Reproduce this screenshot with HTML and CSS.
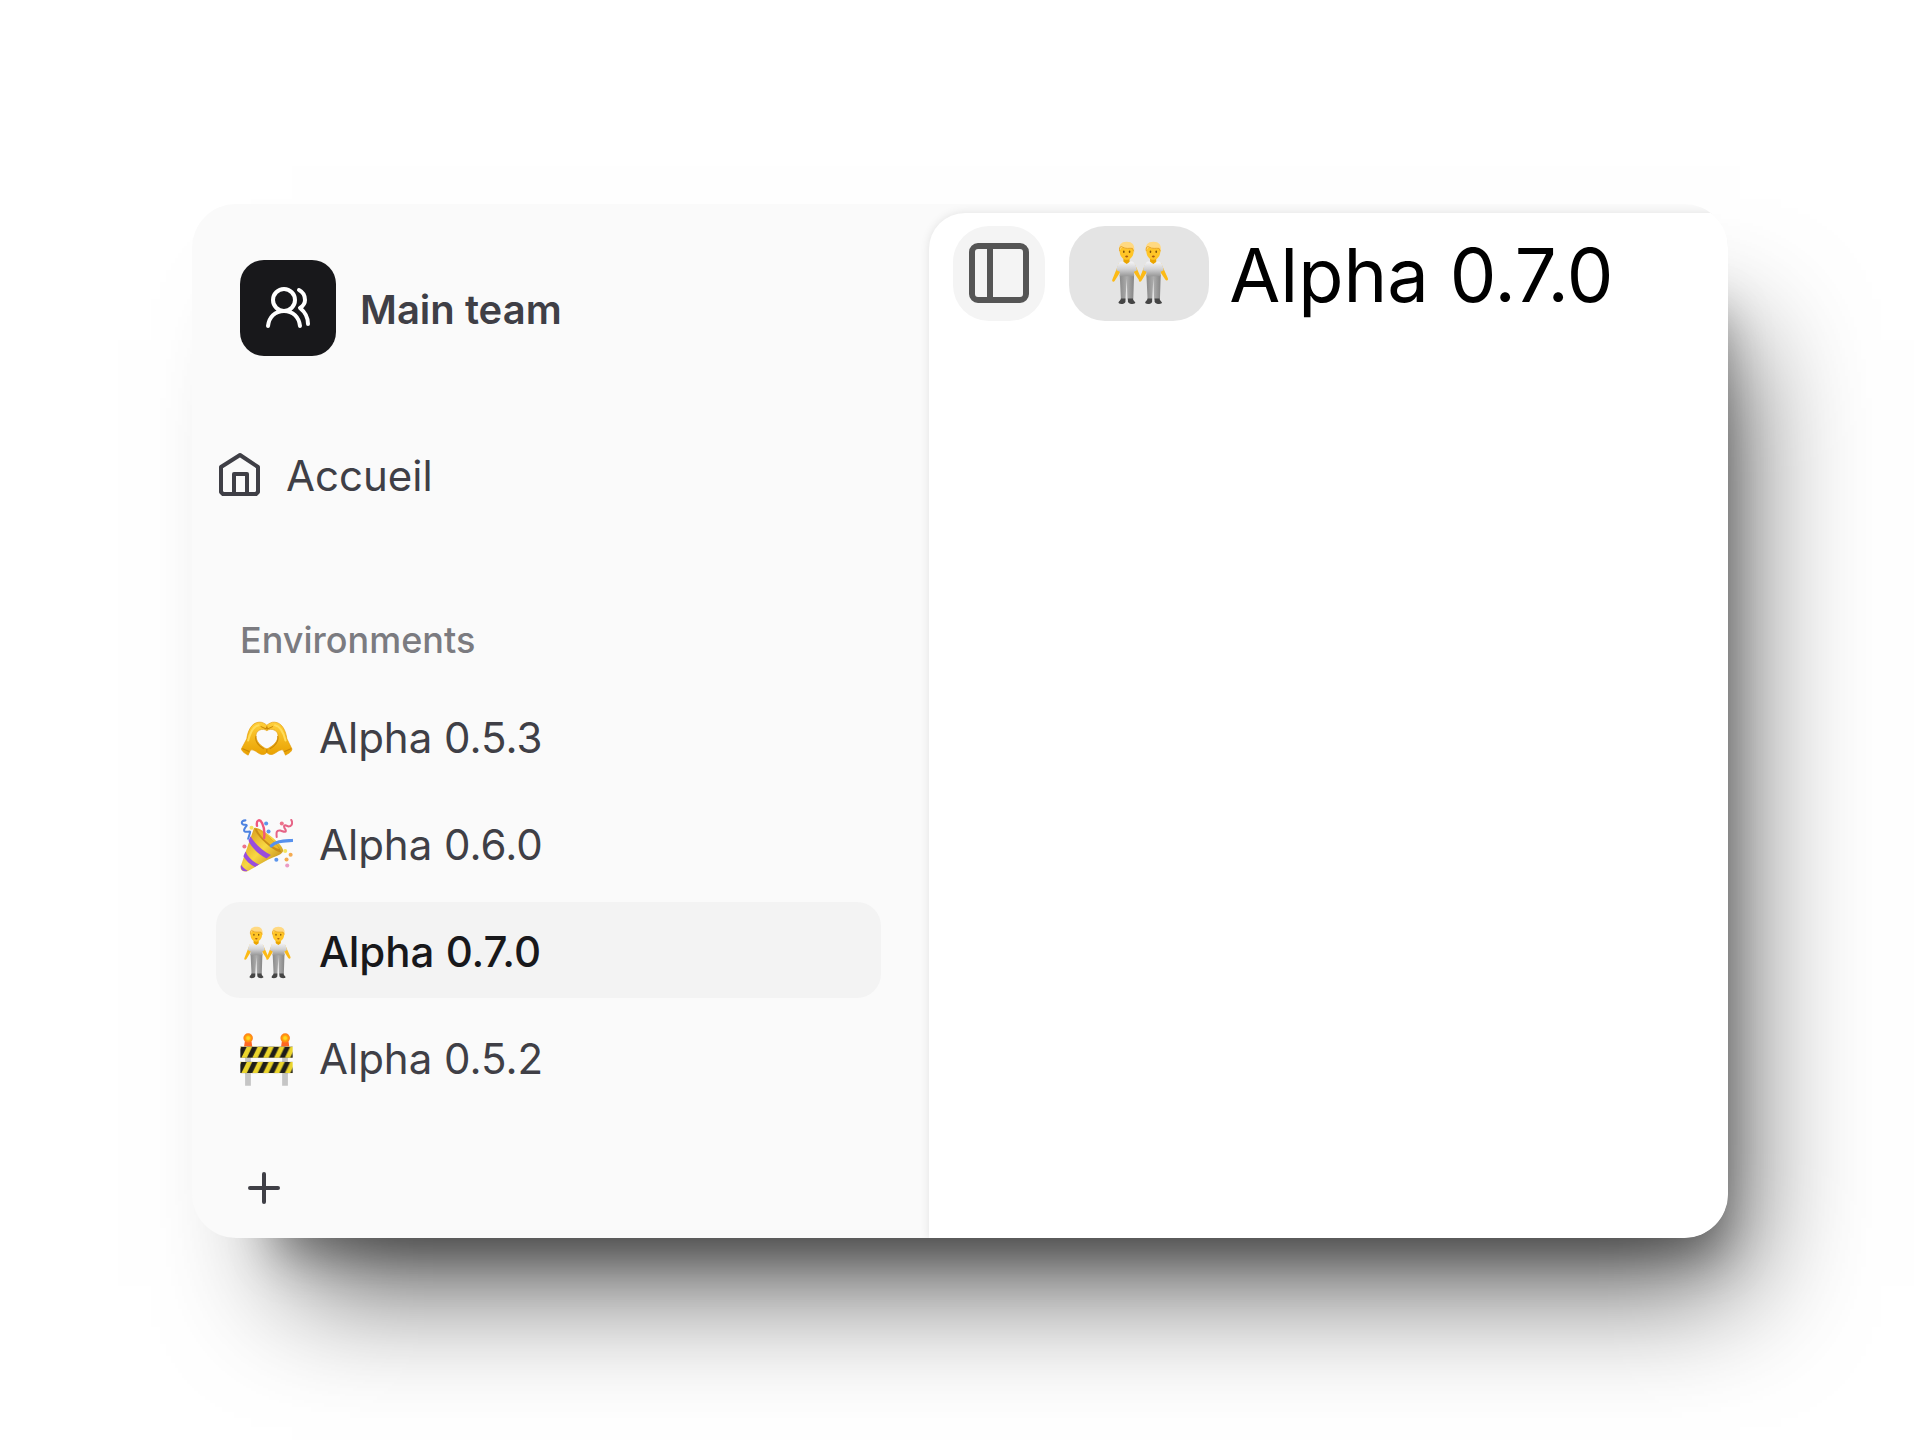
FILE: index.html
```html
<!DOCTYPE html>
<html lang="fr">
<head>
    <meta charset="UTF-8">
    <meta name="viewport" content="width=device-width, initial-scale=1.0">
    <title>Alpha 0.7.0</title>
    <link rel="stylesheet" href="styles.css">
</head>
<body>
    <!-- shared shapes -->
    <svg class="defs" aria-hidden="true">
        <defs>
            <linearGradient id="shirt" x1="0" y1="0" x2="0" y2="1">
                <stop offset="0" stop-color="#f4f4f6"/>
                <stop offset="0.5" stop-color="#d2d2d4"/>
                <stop offset="1" stop-color="#989898"/>
            </linearGradient>
            <linearGradient id="pants" x1="0" y1="0" x2="1" y2="0">
                <stop offset="0" stop-color="#8a8a8a"/>
                <stop offset="0.5" stop-color="#adadad"/>
                <stop offset="1" stop-color="#858585"/>
            </linearGradient>
            <linearGradient id="skin" x1="0" y1="0" x2="0" y2="1">
                <stop offset="0" stop-color="#ffcf3a"/>
                <stop offset="1" stop-color="#e9a100"/>
            </linearGradient>
            <linearGradient id="cone" x1="0" y1="0" x2="1" y2="1">
                <stop offset="0.1" stop-color="#d99a1c"/>
                <stop offset="0.5" stop-color="#f8d843"/>
                <stop offset="0.9" stop-color="#bd8416"/>
            </linearGradient>
            <radialGradient id="lamp">
                <stop offset="0.25" stop-color="#ffd81f"/>
                <stop offset="0.6" stop-color="#ff9d0a"/>
                <stop offset="1" stop-color="#ff7a1c"/>
            </radialGradient>
            <pattern id="stripes" width="32" height="33" patternUnits="userSpaceOnUse" y="7">
                <rect width="32" height="33" fill="#ead42c"/>
                <path d="M-12 33L4 0H20L4 33ZM20 33L36 0H52L36 33Z" fill="#1e1d1a"/>
            </pattern>
            <g id="person">
                <path d="M29 54L13 94C11 100 17 101 19 97L35 71ZM67 54L83 90C86 96 80 98 77 94L62 71Z" fill="#fcba16"/>
                <path d="M40 40H55V52L48 58L40 52Z" fill="#eba500"/>
                <path d="M31 82H66L64 143H50L48 92L45 143H34Z" fill="url(#pants)"/>
                <path d="M39 50L48 56L57 50C66 50 70 54 73 71L66 75V86H31V75L23 71C26 54 30 50 39 50Z" fill="url(#shirt)"/>
                <path d="M34 140H45V148C44 155 27 155 28 150C29 146 33 145 34 140ZM51 140H63C63 145 68 147 69 150C70 155 53 155 51 148Z" fill="#454545"/>
                <path d="M31 22C31 8 65 8 65 22C66 38 56 46 48 46S30 38 31 22Z" fill="#ffc527"/>
                <path d="M30 27C27 10 34 2 48 2S69 10 66 27L62 18C54 18 43 21 38 15L34 18Z" fill="#ffd981"/>
                <path d="M31 25C29 14 34 12 38 15C45 20 55 17 62 18L65 25" fill="none" stroke="#e39b13" stroke-width="2"/>
                <ellipse cx="41" cy="26" rx="2" ry="3" fill="#7c510b"/>
                <ellipse cx="55" cy="26" rx="2" ry="3" fill="#7c510b"/>
                <path d="M44 37C46 35 50 35 52 37C50 41 46 41 44 37Z" fill="#a95a12"/>
            </g>
            <symbol id="people" viewBox="0 0 156 156">
                <use href="#person" x="0"/>
                <use href="#person" x="65"/>
            </symbol>
        </defs>
    </svg>

    <div class="app">
        <aside class="sidebar">
            <div class="team">
                <span class="team-logo">
                    <svg width="48" height="48" viewBox="0 0 48 48" fill="none" stroke="#fff" stroke-width="4" stroke-linecap="round" stroke-linejoin="round" aria-hidden="true">
                        <circle cx="20" cy="16" r="11"/>
                        <path d="M4 42C5 33 11 27 20 27S35 33 36 42"/>
                        <path d="M35 6C39 8 41 11 41 16C41 20 39 22 36 24C41 28 44 34 44 40"/>
                    </svg>
                </span>
                <span class="label">Main team</span>
            </div>

            <a class="home" href="#">
                <svg width="48" height="48" viewBox="0 0 48 48" fill="none" stroke="currentColor" stroke-width="4" stroke-linejoin="round" aria-hidden="true">
                    <path d="M24 5L42 17V42L40 44H7L5 42V17Z"/>
                    <path d="M18 44V24H31V44"/>
                </svg>
                <span class="label">Accueil</span>
            </a>

            <h2 class="section-title">Environments</h2>
            <nav class="env-list">
                <a class="env" href="#">
                    <svg class="emoji" viewBox="0 0 156 156" aria-hidden="true">
                        <path fill-rule="evenodd" fill="url(#skin)" stroke="#e59c05" stroke-width="2" stroke-linejoin="round" d="M4 109L20 79C23 56 34 31 56 30C65 29 73 34 79 39C85 34 93 29 102 30C124 31 135 56 138 79L153 109C152 118 143 122 134 127L127 112C121 110 115 113 105 120C95 127 86 127 79 119C72 127 63 127 53 120C43 113 37 110 31 112L24 127C15 122 7 118 4 109ZM79 55C67 46 47 53 47 70C47 87 61 101 79 109C97 101 112 87 112 70C112 53 91 46 79 55Z"/>
                        <path d="M24 84C30 60 39 42 55 39M134 84C128 60 119 42 103 39" fill="none" stroke="#ffdc5b" stroke-width="6" stroke-linecap="round"/>
                        <path d="M47 72C43 86 51 96 69 108M111 72C115 86 107 96 89 108M8 108L27 116M150 108L131 116M62 43L77 50L79 42L81 50L96 43M79 109V118" fill="none" stroke="#c98606" stroke-width="3" stroke-linecap="round"/>
                    </svg>
                    <span>Alpha 0.5.3</span>
                </a>
                <a class="env" href="#">
                    <svg class="emoji" viewBox="0 0 156 156" aria-hidden="true">
                        <path d="M41 27C52 17 126 72 127 92C127 105 105 109 82 120L25 152C12 159 -1 151 2 139Z" fill="url(#cone)"/>
                        <path d="M43 29C55 24 118 75 121 98C101 99 48 51 43 29Z" fill="#c98c18"/>
                        <path d="M50 31C63 32 106 67 115 88C97 86 61 56 50 31Z" fill="#edb92a"/>
                        <path d="M31 51C44 74 68 94 91 106L78 116C54 104 34 84 25 64ZM16 96C24 114 38 126 56 134L44 141C28 134 17 122 10 110ZM3 135C8 142 14 148 23 152C12 158 -1 151 3 135Z" fill="#994ddd"/>
                        <g fill="none" stroke-width="7" stroke-linecap="round">
                            <path d="M50 20C47 2 58 -1 65 12C71 24 73 39 71 56" stroke="#ef577e"/>
                            <path d="M92 79C106 65 128 65 153 63" stroke="#5791ed" stroke-width="9"/>
                            <path d="M16 4C1 4 2 19 17 17C27 17 7 29 13 36C20 42 34 31 29 42L24 58" stroke="#4d83e1" stroke-width="6"/>
                            <path d="M151 3C157 14 151 22 142 22C128 14 127 22 134 31C138 42 128 37 119 34C106 32 107 40 108 53" stroke="#e66486" stroke-width="6"/>
                        </g>
                        <g fill="#5c96ec">
                            <circle cx="77" cy="13" r="6"/>
                            <circle cx="84" cy="37" r="6"/>
                            <circle cx="107" cy="120" r="6"/>
                        </g>
                        <g fill="#ed748b">
                            <circle cx="123" cy="13" r="6"/>
                            <circle cx="13" cy="81" r="6"/>
                            <circle cx="139" cy="137" r="6" fill="#eb9bc5"/>
                        </g>
                        <g fill="#f4aa50">
                            <circle cx="149" cy="105" r="6"/>
                            <circle cx="137" cy="119" r="6"/>
                            <circle cx="133" cy="94" r="6" fill="#f5e35b"/>
                            <circle cx="34" cy="26" r="6" fill="#f5e35b"/>
                        </g>
                    </svg>
                    <span>Alpha 0.6.0</span>
                </a>
                <a class="env active" href="#" aria-current="page">
                    <svg class="emoji" aria-hidden="true"><use href="#people"/></svg>
                    <span>Alpha 0.7.0</span>
                </a>
                <a class="env" href="#">
                    <svg class="emoji" viewBox="0 0 156 156" aria-hidden="true">
                        <path d="M15 70H32V155H15ZM124 70H141V155H124Z" fill="#c5c5c5"/>
                        <path d="M12 40L14 26H34L36 40ZM121 40L123 26H143L145 40Z" fill="#ff6722"/>
                        <circle cx="24" cy="15" r="14" fill="url(#lamp)"/>
                        <circle cx="133" cy="15" r="14" fill="url(#lamp)"/>
                        <rect x="1" y="40" width="154" height="33" fill="url(#stripes)"/>
                        <g transform="translate(0 45)">
                            <rect x="1" y="40" width="154" height="33" fill="url(#stripes)"/>
                        </g>
                    </svg>
                    <span>Alpha 0.5.2</span>
                </a>
            </nav>

            <button class="add" type="button" aria-label="Ajouter">
                <svg width="32" height="32" viewBox="0 0 32 32" stroke="currentColor" stroke-width="4" stroke-linecap="round" aria-hidden="true">
                    <path d="M16 2V30M2 16H30"/>
                </svg>
            </button>
        </aside>

        <main class="content">
            <header class="topbar">
                <div class="topbar-actions">
                    <button class="toggle" type="button" aria-label="Menu">
                        <svg width="60" height="60" viewBox="0 0 60 60" fill="none" stroke="currentColor" stroke-width="6" aria-hidden="true">
                            <rect x="3" y="3" width="54" height="54" rx="6"/>
                            <path d="M21 3V57"/>
                        </svg>
                    </button>
                    <button class="icon-pill" type="button" aria-label="Emoji">
                        <svg class="emoji" aria-hidden="true"><use href="#people"/></svg>
                    </button>
                </div>
                <h1>Alpha 0.7.0</h1>
            </header>
        </main>
    </div>
</body>
</html>
```
FILE: styles.css
```css
* {
    box-sizing: border-box;
}
body {
    margin: 0;
    padding: 204px 10%;
    min-height: 100vh;
    background: #fff;
    color: #3f3f46;
    font-family: Inter, "Liberation Sans", sans-serif;
    font-size: 42px;
    line-height: 48px;
}
h1, h2 {
    margin: 0;
}
a {
    color: inherit;
    text-decoration: none;
}
button {
    padding: 0;
    border: none;
    background: none;
    color: inherit;
    cursor: pointer;
}
svg {
    display: block;
    flex-shrink: 0;
}
.defs {
    position: absolute;
    width: 0;
    height: 0;
}
.app {
    display: flex;
    background: #fafafa;
    border-radius: 44px;
    box-shadow: 40px 62px 44px -46px rgba(0, 0, 0, 0.35), 56px 92px 116px -44px rgba(0, 0, 0, 0.66);
}

/* sidebar */
.sidebar {
    width: 48%;
    padding: 56px 48px 2px 24px;
}
.team {
    display: flex;
    align-items: center;
    gap: 24px;
    padding-left: 24px;
    font-size: 40px;
    font-weight: 600;
}
.team-logo {
    display: flex;
    align-items: center;
    justify-content: center;
    width: 96px;
    height: 96px;
    border-radius: 24px;
    background: #18181b;
}
.label {
    padding-top: 4px;
}
.home {
    display: flex;
    align-items: center;
    gap: 22px;
    height: 96px;
    margin-top: 70px;
}
.section-title {
    margin: 94px 0 24px;
    padding-left: 24px;
    color: #7b7b80;
    font-size: 36px;
    font-weight: 500;
}
.env-list {
    display: flex;
    flex-direction: column;
    gap: 11px;
}
.env {
    display: flex;
    align-items: center;
    gap: 26px;
    height: 96px;
    padding: 4px 24px 0;
    border-radius: 24px;
}
.env.active {
    background: #f3f3f3;
    color: #18181b;
    font-weight: 500;
}
.emoji {
    width: 53px;
    height: 53px;
}
.add {
    display: flex;
    align-items: center;
    justify-content: center;
    width: 96px;
    height: 96px;
    margin-top: 35px;
}

/* main panel */
.content {
    flex: 1;
    margin-top: 9px;
    background: #fff;
    border-radius: 36px 0 44px 0;
    box-shadow: 0 0 10px rgba(0, 0, 0, 0.1);
    clip-path: inset(-9px 0 0 -9px round 0 44px 44px 0);
}
.topbar {
    display: flex;
    align-items: center;
    gap: 20px;
    padding: 12px 24px;
}
.topbar-actions {
    display: flex;
    gap: 24px;
}
.toggle, .icon-pill {
    display: flex;
    align-items: center;
    justify-content: center;
    height: 95px;
    border-radius: 36px;
}
.toggle {
    width: 92px;
    background: #f4f4f4;
    color: #555;
}
.icon-pill {
    width: 140px;
    background: #e4e4e4;
}
.icon-pill .emoji {
    width: 64px;
    height: 64px;
}
h1 {
    padding-top: 4px;
    color: #000;
    font-size: 74px;
    font-weight: 400;
    line-height: 92px;
}
```
